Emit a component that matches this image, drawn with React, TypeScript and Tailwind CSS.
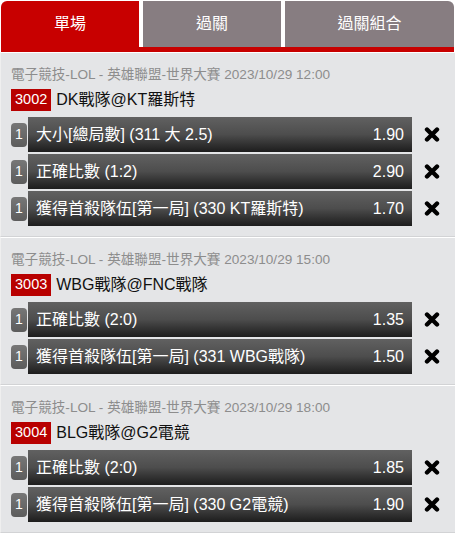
const font = "font-['Liberation_Sans','Noto_Sans_CJK_TC',sans-serif]";

type Bet = { label: string; odds: string };

type Match = {
  league: string;
  time: string;
  code: string;
  title: string;
  bets: Bet[];
};

const matches: Match[] = [
  {
    league: "電子競技-LOL - 英雄聯盟-世界大賽",
    time: "2023/10/29 12:00",
    code: "3002",
    title: "DK戰隊@KT羅斯特",
    bets: [
      { label: "大小[總局數] (311 大 2.5)", odds: "1.90" },
      { label: "正確比數 (1:2)", odds: "2.90" },
      { label: "獲得首殺隊伍[第一局] (330 KT羅斯特)", odds: "1.70" },
    ],
  },
  {
    league: "電子競技-LOL - 英雄聯盟-世界大賽",
    time: "2023/10/29 15:00",
    code: "3003",
    title: "WBG戰隊@FNC戰隊",
    bets: [
      { label: "正確比數 (2:0)", odds: "1.35" },
      { label: "獲得首殺隊伍[第一局] (331 WBG戰隊)", odds: "1.50" },
    ],
  },
  {
    league: "電子競技-LOL - 英雄聯盟-世界大賽",
    time: "2023/10/29 18:00",
    code: "3004",
    title: "BLG戰隊@G2電競",
    bets: [
      { label: "正確比數 (2:0)", odds: "1.85" },
      { label: "獲得首殺隊伍[第一局] (330 G2電競)", odds: "1.90" },
    ],
  },
];

const RemoveIcon = () => (
  <svg width="16" height="15" viewBox="0 0 16 15" className="block">
    <path d="M3 2.5 L13 12.5 M13 2.5 L3 12.5" stroke="#000" strokeWidth="4.4" strokeLinecap="round" />
  </svg>
);

const App = () => {
  const tabs = ["單場", "過關", "過關組合"];

  return (
    <div className={`w-[455px] min-h-[535px] bg-white ${font}`}>
      {/* Tabs */}
      <div className="pt-[1px] px-[1px]">
        <div className="flex gap-[4px] h-[46px]">
          {tabs.map((tab, i) => (
            <div
              key={tab}
              className={`flex items-center justify-center text-white text-[16px] ${
                i === 0 ? "w-[138px] bg-[#c80000] rounded-tl-[6px]" : i === 1 ? "w-[138px] bg-[#877d81]" : "flex-1 bg-[#877d81] rounded-tr-[6px]"
              }`}
            >
              {tab}
            </div>
          ))}
        </div>
        <div className="h-[5px] bg-[#c80000]"></div>
      </div>

      {/* Match list */}
      {matches.map((match) => (
        <div
          key={match.code}
          className="bg-[#e4e5e7] border-t border-t-white border-b border-b-[#d2d3d5] border-l border-l-[#efefef] pt-[12px] pb-[10px]"
        >
          <div className="pl-[10px] h-[20px] leading-[20px] text-[13.6px] text-[#8d8d8d] whitespace-nowrap">
            {match.league} {match.time}
          </div>

          <div className="flex items-center gap-[5px] pl-[10px] mt-[4px] h-[22px]">
            <span className="h-[22px] px-[4px] flex items-center bg-[#b80000] text-white text-[14.5px]">
              {match.code}
            </span>
            <span className="text-[16px] text-[#111]">{match.title}</span>
          </div>

          <div className="flex flex-col gap-[2px] mt-[6px] pl-[10px] pr-[3px]">
            {match.bets.map((bet, i) => (
              <div key={i} className="flex items-center h-[35px]">
                <div className="w-[16px] h-[24px] mr-[1px] rounded-[4px] bg-linear-to-b from-[#777] to-[#5c5c5c] flex items-center justify-center text-white text-[14px]">
                  1
                </div>
                <div className="flex-1 h-full flex items-center justify-between px-[8px] text-white text-[16px] bg-linear-to-b from-[#616161] via-[#4d4d4d] to-[#1d1d1d]">
                  <span className="whitespace-nowrap">{bet.label}</span>
                  <span>{bet.odds}</span>
                </div>
                <div className="w-[40px] flex justify-center">
                  <RemoveIcon />
                </div>
              </div>
            ))}
          </div>
        </div>
      ))}
    </div>
  );
};

export default App;
